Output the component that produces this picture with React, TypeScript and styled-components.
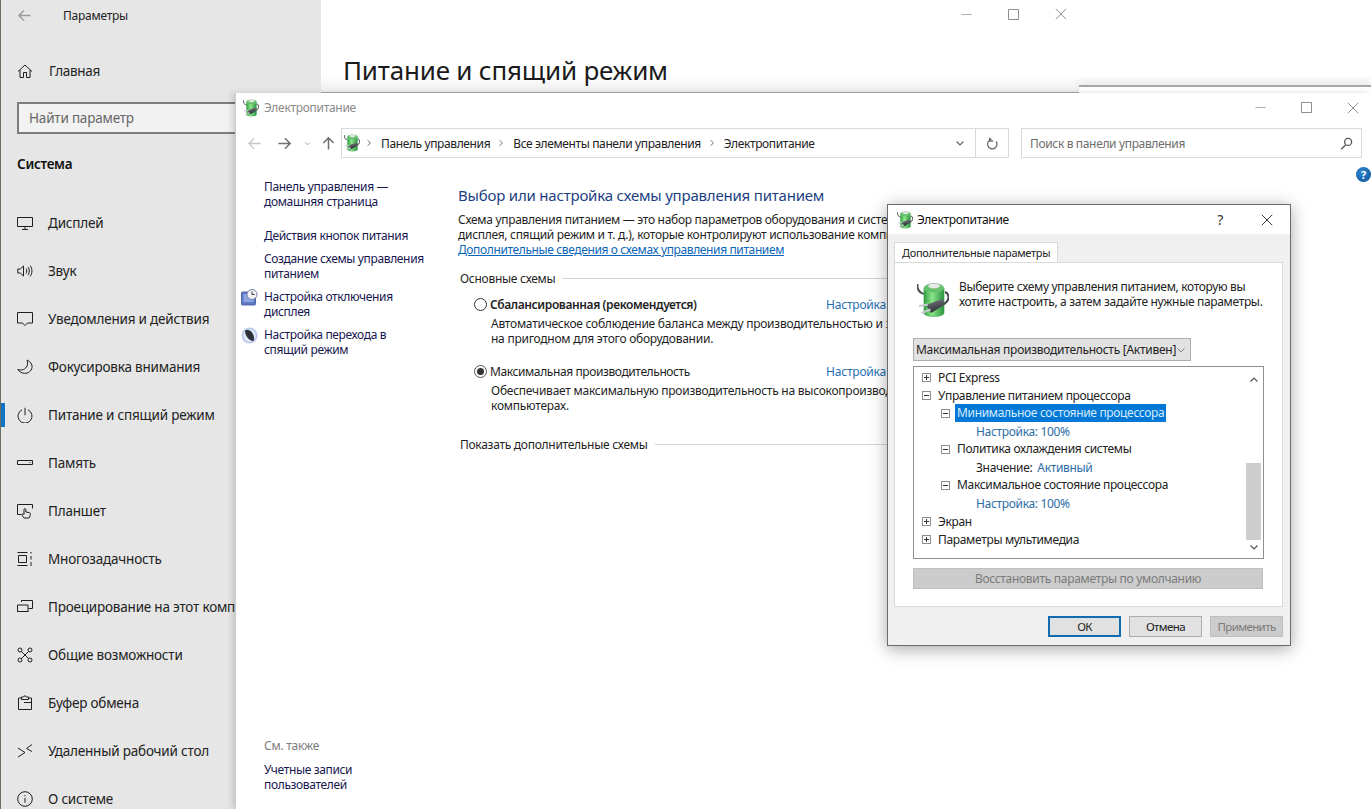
import React, { ReactNode, useId } from "react";
import styled, { createGlobalStyle } from "styled-components";

const UI = `"Noto Sans", "Open Sans", "Liberation Sans", sans-serif`;

const Global = createGlobalStyle`
  html, body { margin: 0; padding: 0; background: #fff; overflow: hidden; }
  * { box-sizing: border-box; }
  body { font-family: ${UI}; font-size: 12px; color: #1a1a1a; }
`;

const Desktop = styled.div`
  position: relative;
  width: 1371px;
  height: 809px;
  overflow: hidden;
  background: #fff;
`;

/* ---------- Settings window ---------- */
const SettingsWindow = styled.div`
  position: absolute;
  left: 0;
  top: 0;
  width: 1079px;
  height: 809px;
  display: flex;
  align-items: flex-start;
`;
const SettingsSidebar = styled.aside`
  width: 321px;
  height: 809px;
  flex: none;
  overflow: hidden;
  background: #e6e6e6;
  border-left: 1px solid #6d6d62;
  display: flex;
  flex-direction: column;
`;
const SettingsHeader = styled.div`
  height: 30px;
  flex: none;
  display: flex;
  align-items: center;
  padding-left: 16px;
  gap: 31px;
  font-size: 12px;
  letter-spacing: -0.25px;
  color: #222;
`;
const HomeRow = styled.div`
  height: 48px;
  flex: none;
  margin-top: 17px;
  display: flex;
  align-items: center;
  padding-left: 16px;
  gap: 16px;
  font-size: 13.5px;
  letter-spacing: -0.3px;
  color: #222;
`;
const SearchBox = styled.div`
  margin: 7px 0 0 16px;
  width: 290px;
  height: 32px;
  flex: none;
  border: 2px solid #7d7d7d;
  background: #f2f2f2;
  padding-left: 10px;
  display: flex;
  align-items: center;
  font-size: 13.5px;
  letter-spacing: -0.2px;
  color: #666;
`;
const SectionTitle = styled.div`
  margin: 20px 0 0 16px;
  height: 20px;
  flex: none;
  line-height: 20px;
  font-size: 13.5px;
  font-weight: 600;
  letter-spacing: -0.3px;
  color: #111;
`;
const NavList = styled.nav`
  margin-top: 25px;
  flex: none;
  display: flex;
  flex-direction: column;
`;
const NavRow = styled.div<{ $active?: boolean }>`
  position: relative;
  height: 48px;
  flex: none;
  display: flex;
  align-items: center;
  padding-left: 16px;
  gap: 15px;
  font-size: 13.5px;
  letter-spacing: -0.2px;
  white-space: nowrap;
  color: #222;
  &::before {
    content: "";
    display: ${(p) => (p.$active ? "block" : "none")};
    position: absolute;
    left: -1px;
    top: 12px;
    width: 5px;
    height: 24px;
    background: #0f74c4;
  }
`;
const SettingsMain = styled.main`
  flex: 1;
  height: 93px;
  background: linear-gradient(#fff 82%, #efefef 99%);
  border-bottom: 1px solid #a8a8a8;
  display: flex;
  flex-direction: column;
`;
const SettingsCaption = styled.div`
  height: 28px;
  flex: none;
  display: flex;
  justify-content: flex-end;
  align-items: center;
  padding-right: 12px;
  gap: 36px;
`;
const PageTitle = styled.h1`
  margin: 22px 0 0 22px;
  font-size: 26px;
  line-height: 40px;
  font-weight: 400;
  letter-spacing: -0.2px;
  color: #1b1b1b;
`;
const GlyphSvg = styled.svg`
  display: block;
  flex: none;
`;

/* ---------- Control panel window ---------- */
const RearEdge = styled.div`
  position: absolute;
  left: 1079px;
  top: 85px;
  width: 292px;
  height: 10px;
  background: #fff;
  border-top: 2px solid #a6a6a6;
  box-shadow: 0 -5px 6px rgba(0, 0, 0, 0.08);
`;
const CpWindow = styled.section`
  position: absolute;
  left: 235px;
  top: 93px;
  width: 1136px;
  height: 716px;
  background: #fff;
  box-shadow: -3px 0 6px rgba(0, 0, 0, 0.14);
  border-left: 1px solid #c9c9c9;
  display: flex;
  flex-direction: column;
`;
const CpCaption = styled.div`
  height: 29px;
  flex: none;
  display: flex;
  align-items: center;
  padding: 0 12px 0 7px;
  gap: 5px;
  font-size: 12px;
  letter-spacing: -0.3px;
  color: #8a8a8a;
`;
const CaptionSpacer = styled.div`
  flex: 1;
`;
const CpCaptionButtons = styled.div`
  display: flex;
  align-items: center;
  gap: 35px;
`;
const Toolbar = styled.div`
  height: 36px;
  flex: none;
  padding: 6px 9px 0 10px;
  display: flex;
  align-items: flex-start;
`;
const ToolButtons = styled.div`
  width: 95px;
  height: 30px;
  display: flex;
  align-items: center;
  flex: none;
`;
const ToolSlot = styled.div<{ $w: number }>`
  width: ${(p) => p.$w}px;
  display: flex;
  justify-content: center;
  flex: none;
`;
const AddressBar = styled.div`
  width: 668px;
  height: 30px;
  flex: none;
  border: 1px solid #d9d9d9;
  display: flex;
  align-items: center;
  padding-left: 2px;
  font-size: 12px;
  letter-spacing: -0.38px;
  color: #222;
`;
const Crumb = styled.span`
  white-space: nowrap;
`;
const CrumbSep = styled.span<{ $lead?: boolean }>`
  margin: 0 8px 0 ${(p) => (p.$lead ? 5 : 7)}px;
  display: flex;
`;
const AddressTail = styled.div`
  margin-left: auto;
  display: flex;
  height: 100%;
  align-items: center;
`;
const DropZone = styled.div`
  width: 30px;
  display: flex;
  justify-content: center;
`;
const RefreshZone = styled.div`
  width: 33px;
  height: 100%;
  border-left: 1px solid #d9d9d9;
  display: flex;
  justify-content: center;
  align-items: center;
`;
const SearchField = styled.div`
  margin-left: 12px;
  flex: 1;
  height: 30px;
  border: 1px solid #d9d9d9;
  display: flex;
  align-items: center;
  justify-content: space-between;
  padding: 0 8px 0 8px;
  font-size: 12px;
  letter-spacing: -0.35px;
  color: #6d6d6d;
`;
const CpBody = styled.div`
  flex: 1;
  min-height: 0;
  display: flex;
  position: relative;
`;
const LeftPane = styled.div`
  width: 222px;
  flex: none;
  padding: 21px 0 17px 5px;
  display: flex;
  flex-direction: column;
`;
const PaneLink = styled.div<{ $gap: number }>`
  margin-top: ${(p) => p.$gap}px;
  display: flex;
  font-size: 12px;
  line-height: 15px;
  letter-spacing: -0.35px;
  color: #17174f;
`;
const PaneIconSlot = styled.div`
  width: 23px;
  flex: none;
`;
const SeeAlso = styled.div`
  margin-top: auto;
  padding-left: 23px;
  font-size: 12px;
  line-height: 15px;
  letter-spacing: -0.25px;
  color: #7c7c7c;
`;
const ContentPane = styled.div`
  flex: 1;
  min-width: 0;
  padding-top: 27px;
  overflow: hidden;
`;
const Heading = styled.h2`
  margin: 0;
  font-size: 15px;
  line-height: 20px;
  font-weight: 400;
  letter-spacing: -0.2px;
  color: #1c3f83;
  white-space: nowrap;
`;
const Para = styled.div`
  margin-top: 7px;
  font-size: 12px;
  line-height: 15px;
  letter-spacing: -0.3px;
  white-space: nowrap;
  color: #1f1f1f;
`;
const MoreLink = styled.a`
  letter-spacing: -0.38px;
  color: #0a66b8;
  text-decoration: underline;
`;
const GroupHead = styled.div<{ $gap: number }>`
  margin-top: ${(p) => p.$gap}px;
  margin-left: 2px;
  width: 600px;
  display: flex;
  align-items: center;
  gap: 7px;
  font-size: 12px;
  line-height: 15px;
  letter-spacing: -0.28px;
  white-space: nowrap;
  color: #1f1f1f;
  &::after {
    content: "";
    flex: 1;
    height: 1px;
    background: #d4d4d4;
  }
`;
const Plan = styled.div<{ $gap: number }>`
  margin-top: ${(p) => p.$gap}px;
  padding-left: 16px;
  position: relative;
`;
const PlanHead = styled.div`
  display: flex;
  align-items: center;
  gap: 3px;
  font-size: 12px;
  line-height: 15px;
  white-space: nowrap;
  color: #1f1f1f;
`;
const RadioDot = styled.span<{ $on?: boolean }>`
  width: 13px;
  height: 13px;
  flex: none;
  border-radius: 50%;
  border: 1px solid ${(p) => (p.$on ? "#555" : "#333")};
  background: #fff;
  display: flex;
  align-items: center;
  justify-content: center;
  &::after {
    content: "";
    display: ${(p) => (p.$on ? "block" : "none")};
    width: 7px;
    height: 7px;
    border-radius: 50%;
    background: #333;
  }
`;
const PlanName = styled.span<{ $bold?: boolean }>`
  font-weight: ${(p) => (p.$bold ? 600 : 400)};
  letter-spacing: -0.4px;
`;
const PlanSetup = styled.a`
  position: absolute;
  left: 368px;
  top: 0;
  font-size: 12px;
  line-height: 15px;
  letter-spacing: -0.2px;
  white-space: nowrap;
  color: #1f6fb2;
`;
const PlanDesc = styled.div`
  margin: 4px 0 0 17px;
  font-size: 12px;
  line-height: 15px;
  letter-spacing: -0.25px;
  white-space: nowrap;
  color: #1f1f1f;
`;
const HelpBadge = styled.div`
  position: absolute;
  right: 0;
  top: 9px;
  width: 15px;
  height: 15px;
  border-radius: 50%;
  background: radial-gradient(circle at 40% 35%, #2f86cf, #0b4f96);
  color: #fff;
  font-size: 11px;
  font-weight: 700;
  line-height: 15px;
  text-align: center;
`;

/* ---------- Dialog ---------- */
const Dialog = styled.section`
  position: absolute;
  left: 887px;
  top: 204px;
  width: 404px;
  height: 442px;
  background: #f0f0f0;
  border: 1px solid #6b6b6b;
  box-shadow: 0 3px 16px rgba(0, 0, 0, 0.35);
  display: flex;
  flex-direction: column;
`;
const DialogCaption = styled.div`
  height: 29px;
  flex: none;
  background: #fff;
  display: flex;
  align-items: center;
  padding: 0 17px 0 9px;
  gap: 4px;
  font-size: 12px;
  letter-spacing: -0.3px;
  color: #111;
`;
const HelpMark = styled.span`
  font-size: 14px;
  margin-right: 34px;
  color: #333;
`;
const TabStrip = styled.div`
  padding: 8px 0 0 6px;
  flex: none;
  display: flex;
`;
const Tab = styled.div`
  height: 21px;
  width: 164px;
  background: #fff;
  border: 1px solid #d9d9d9;
  border-bottom: none;
  padding-left: 7px;
  font-size: 11px;
  line-height: 20px;
  letter-spacing: -0.3px;
  white-space: nowrap;
  color: #222;
`;
const TabPanel = styled.div`
  margin: -1px 7px 0 6px;
  height: 345px;
  flex: none;
  background: #fff;
  border: 1px solid #d9d9d9;
  padding: 0 18px;
  display: flex;
  flex-direction: column;
`;
const Intro = styled.div`
  margin-top: 19px;
  height: 38px;
  display: flex;
  gap: 10px;
  padding-left: 4px;
  flex: none;
`;
const IntroText = styled.div`
  font-size: 12px;
  line-height: 15px;
  letter-spacing: -0.33px;
  white-space: nowrap;
  margin-top: -3px;
  color: #222;
`;
const PlanSelect = styled.div`
  margin-top: 18px;
  width: 278px;
  height: 23px;
  flex: none;
  background: #e2e2e2;
  border: 1px solid #adadad;
  display: flex;
  align-items: center;
  justify-content: space-between;
  padding: 0 4px 0 2px;
  font-size: 12px;
  letter-spacing: -0.27px;
  white-space: nowrap;
  color: #222;
`;
const Tree = styled.div`
  margin-top: 5px;
  width: 351px;
  height: 193px;
  flex: none;
  border: 1px solid #8f8f8f;
  display: flex;
`;
const TreeRows = styled.div`
  flex: 1;
  padding-top: 1px;
  min-width: 0;
`;
const TreeRow = styled.div<{ $depth: number }>`
  height: 18px;
  padding-left: ${(p) => 8 + p.$depth * 19}px;
  display: flex;
  align-items: center;
  font-size: 12px;
  letter-spacing: -0.33px;
  white-space: nowrap;
  color: #222;
`;
const TreeValueRow = styled(TreeRow)`
  padding-left: 62px;
`;
const Expander = styled.span<{ $open?: boolean }>`
  position: relative;
  width: 9px;
  height: 9px;
  flex: none;
  margin-right: 7px;
  border: 1px solid #8e8e8e;
  background: #fff;
  &::before {
    content: "";
    position: absolute;
    left: 1px;
    top: 3px;
    width: 5px;
    height: 1px;
    background: #333;
  }
  &::after {
    content: "";
    display: ${(p) => (p.$open ? "none" : "block")};
    position: absolute;
    left: 3px;
    top: 1px;
    width: 1px;
    height: 5px;
    background: #333;
  }
`;
const RowLabel = styled.span<{ $selected?: boolean }>`
  height: 18px;
  line-height: 18px;
  margin-left: -2px;
  padding: 0 2px;
  background: ${(p) => (p.$selected ? "#0078d7" : "transparent")};
  color: ${(p) => (p.$selected ? "#d6ebfb" : "inherit")};
`;
const RowValue = styled.span`
  color: #2c6ea6;
`;
const RowKey = styled.span`
  margin-right: 5px;
`;
const ScrollBar = styled.div`
  width: 15px;
  margin-right: 2px;
  flex: none;
  display: flex;
  flex-direction: column;
  align-items: center;
  justify-content: space-between;
  padding: 8px 0 6px;
  position: relative;
`;
const ScrollThumb = styled.div`
  position: absolute;
  left: 0;
  top: 96px;
  width: 15px;
  height: 77px;
  background: #cdcdcd;
`;
const RestoreButton = styled.div`
  margin-top: 9px;
  width: 350px;
  height: 21px;
  flex: none;
  background: #cccccc;
  border: 1px solid #bfbfbf;
  display: flex;
  align-items: center;
  justify-content: center;
  font-size: 12px;
  letter-spacing: -0.3px;
  color: #7b7b7b;
`;
const DialogFooter = styled.div`
  margin-top: 9px;
  padding-right: 7px;
  display: flex;
  justify-content: flex-end;
  gap: 8px;
`;
const FooterButton = styled.div<{ $kind?: "primary" | "disabled" }>`
  width: 73px;
  height: 21px;
  display: flex;
  align-items: center;
  justify-content: center;
  font-size: 11.5px;
  letter-spacing: -0.6px;
  background: ${(p) => (p.$kind === "disabled" ? "#cccccc" : "#e1e1e1")};
  border: ${(p) =>
    p.$kind === "primary" ? "2px solid #0f6cb0" : p.$kind === "disabled" ? "1px solid #bfbfbf" : "1px solid #adadad"};
  color: ${(p) => (p.$kind === "disabled" ? "#7b7b7b" : "#222")};
`;

/* ---------- Icons ---------- */
type GlyphProps = { size?: number; color?: string; children: ReactNode; sw?: number };
const Glyph = ({ size = 16, color = "#1f1f1f", children, sw = 1 }: GlyphProps) => (
  <GlyphSvg width={size} height={size} viewBox="0 0 16 16" fill="none" stroke={color} strokeWidth={sw}>
    {children}
  </GlyphSvg>
);

const HomeIcon = () => (
  <Glyph>
    <path d="M1 8.5 8 2l7 6.5M3 7v7.5h3.5v-5h3v5H13V7" />
  </Glyph>
);
const DisplayIcon = () => (
  <Glyph>
    <path d="M.5 2.5h15v9H.5zM8 11.5v3M5 14.5h6" />
  </Glyph>
);
const SoundIcon = () => (
  <Glyph>
    <path d="M.8 6h2.4L6.5 3v10L3.2 10H.8zM9 5.5c1 1.4 1 3.6 0 5M11 4c1.8 2.2 1.8 5.8 0 8M13 2.5c2.6 3 2.6 8 0 11" />
  </Glyph>
);
const NotifyIcon = () => (
  <Glyph>
    <path d="M.5 1.5h15V12H10.5L8 14.5 5.5 12H.5z" />
  </Glyph>
);
const MoonIcon = () => (
  <Glyph>
    <path d="M10 1c3 1.5 5.5 4 5 7.5-.6 3.8-4 6-7.5 5.8C4.5 14.2 2 12.5.8 10.5c4 1.5 8-.5 9.2-3.5.8-2 .7-4 0-6z" />
  </Glyph>
);
const PowerIcon = () => (
  <Glyph>
    <path d="M8 .8v7.5M5 2.8a7 7 0 1 0 6 0" />
  </Glyph>
);
const MemoryIcon = () => (
  <Glyph>
    <path d="M.5 5.5h15v4H.5zM12.5 7.5h1" />
  </Glyph>
);
const TabletIcon = () => (
  <Glyph>
    <path d="M4.5 11.5H.5v-10h15v4M7 15c-1-1.5-2-2.500-2-3.500s1-.8 2 0V6.500c0-1.200 1.800-1.200 1.800 0V9l3.700.6c.9.300 1 1 .8 2-.2 1.200-.5 2.400-1.300 3.400z" />
  </Glyph>
);
const MultitaskIcon = () => (
  <Glyph>
    <path d="M.5 1.5h10M.5 14.5h10M1.500 4.500h8v7h-8zM14 1v1.500M14 5v3.500M14 11v4" />
  </Glyph>
);
const ProjectIcon = () => (
  <Glyph>
    <path d="M4.500 3V1.500h11v8h-4M.5 6H11v6.500H.5zM0 12.500h11.500" />
  </Glyph>
);
const AccessIcon = () => (
  <Glyph>
    <circle cx="3" cy="3" r="2" />
    <circle cx="13" cy="3" r="2" />
    <circle cx="3" cy="13" r="2" />
    <circle cx="13" cy="13" r="2" />
    <path d="M4.500 4.500l7 7M11.500 4.500l-7 7" />
  </Glyph>
);
const ClipIcon = () => (
  <Glyph>
    <path d="M4.500 3H1.500v11.500h13V3H11M4.500 4.500V2h2c0-1.500 3-1.500 3 0h2v2.500zM7 7.500h7.500" />
  </Glyph>
);
const RemoteIcon = () => (
  <Glyph>
    <path d="M1 5l7 4.500-7 4.500M15 1.500L9.500 5.500l5.500 3" />
  </Glyph>
);
const InfoIcon = () => (
  <Glyph>
    <circle cx="8" cy="8" r="7.3" />
    <path d="M8 6.800v5M8 4v1.200" />
  </Glyph>
);

const ArrowLeft = ({ color }: { color: string }) => (
  <Glyph size={15} color={color} sw={1.4}>
    <path d="M14.500 8H2M7.500 2.500 2 8l5.500 5.500" />
  </Glyph>
);
const ArrowRight = ({ color }: { color: string }) => (
  <Glyph size={15} color={color} sw={1.6}>
    <path d="M1.500 8H14M8.500 2.500 14 8l-5.500 5.500" />
  </Glyph>
);
const ArrowUp = ({ color }: { color: string }) => (
  <Glyph size={15} color={color} sw={1.6}>
    <path d="M8 14.500V2M2.500 7.500 8 2l5.500 5.500" />
  </Glyph>
);
const Chevron = ({ size = 9, color = "#666", sw = 1.6 }: { size?: number; color?: string; sw?: number }) => (
  <Glyph size={size} color={color} sw={sw}>
    <path d="M2.500 5.500 8 11l5.500-5.500" />
  </Glyph>
);
const ChevronUp = ({ size = 9, color = "#666", sw = 1.6 }: { size?: number; color?: string; sw?: number }) => (
  <Glyph size={size} color={color} sw={sw}>
    <path d="M2.500 10.500 8 5l5.500 5.500" />
  </Glyph>
);
const ChevronRight = () => (
  <Glyph size={8} color="#777" sw={2}>
    <path d="M5 2.500l6 5.500-6 5.500" />
  </Glyph>
);
const RefreshIcon = () => (
  <Glyph size={13} color="#6a6a6a" sw={1.6}>
    <path d="M12.500 5.500A5.800 5.800 0 1 1 7 3H4.500M4.500 .5V5H9" />
  </Glyph>
);
const LensIcon = () => (
  <Glyph size={13} color="#555" sw={1.6}>
    <circle cx="10" cy="6" r="4.300" />
    <path d="M7 9.500 1.500 15" />
  </Glyph>
);
const WinMin = ({ c = "#888" }: { c?: string }) => (
  <Glyph size={11} color={c}>
    <path d="M.5 8h15" />
  </Glyph>
);
const WinMax = ({ c = "#888" }: { c?: string }) => (
  <Glyph size={11} color={c} sw={1.4}>
    <path d="M.7.7h14.600v14.600H.7z" />
  </Glyph>
);
const WinClose = ({ c = "#888" }: { c?: string }) => (
  <Glyph size={12} color={c} sw={1.2}>
    <path d="M1 1l14 14M15 1 1 15" />
  </Glyph>
);

const PowerPlanIcon = ({ size = 16 }: { size?: number }) => {
  const id = useId().replace(/:/g, "");
  return (
    <GlyphSvg width={size} height={size * 1.125} viewBox="0 0 32 36" fill="none">
      <defs>
        <linearGradient id={`b${id}`} x1="0" x2="1" y1="0" y2="0">
          <stop offset="0" stopColor="#2f9d42" />
          <stop offset="0.4" stopColor="#8ce58a" />
          <stop offset="1" stopColor="#2c9240" />
        </linearGradient>
        <linearGradient id={`p${id}`} x1="0" x2="0.3" y1="0" y2="1">
          <stop offset="0" stopColor="#7b7f83" />
          <stop offset="1" stopColor="#2c2f33" />
        </linearGradient>
      </defs>
      <path d="M.5 2C0 8 3 11 7 12" stroke="#45494d" strokeWidth="1.800" />
      <path d="M28 10c4 1 4.500 7 1.500 10-1 1-2 1.500-3 1.800" stroke="#45494d" strokeWidth="2" />
      <path d="M7 6v25c0 4.500 20 4.500 20 0V6z" fill={`url(#b${id})`} stroke="#41a350" strokeWidth="0.700" />
      <ellipse cx="17" cy="6" rx="10" ry="4.300" fill="#5fc565" stroke="#7bb883" strokeWidth="0.700" />
      <ellipse cx="17" cy="4" rx="6" ry="2.600" fill="#e6ece6" stroke="#a9b9a9" strokeWidth="0.600" />
      <path d="M9 23l16-6 4 5-15 9z" fill={`url(#p${id})`} />
      <path d="M2 24l9-1.500M4.500 31l9-3.500" stroke="#c6cacd" strokeWidth="2.200" />
    </GlyphSvg>
  );
};

const ClockScreenIcon = () => (
  <GlyphSvg width={17} height={17} viewBox="0 0 17 17">
    <rect x="0.5" y="3" width="14" height="13" rx="1" fill="#5e79c4" stroke="#5068ad" />
    <rect x="2.5" y="5" width="10" height="8" fill="#8fa6e2" />
    <circle cx="11" cy="5.5" r="5" fill="#f2f2f2" stroke="#6f7fae" />
    <path d="M11 2.500v3h2.500" stroke="#333" fill="none" />
  </GlyphSvg>
);
const SleepIcon = () => (
  <GlyphSvg width={17} height={17} viewBox="0 0 17 17">
    <circle cx="8.5" cy="8.5" r="8" fill="#b9c9ea" />
    <circle cx="8.5" cy="8.5" r="6.3" fill="#dfe6f4" />
    <path d="M4 3.500c4-1.500 8 1 9 7 .2 1.500-.2 2.700-.7 3.500C8 13.500 4 9 4 3.500z" fill="#2d3038" />
  </GlyphSvg>
);

const navItems: { label: string; icon: ReactNode; active?: boolean }[] = [
  { label: "Дисплей", icon: <DisplayIcon /> },
  { label: "Звук", icon: <SoundIcon /> },
  { label: "Уведомления и действия", icon: <NotifyIcon /> },
  { label: "Фокусировка внимания", icon: <MoonIcon /> },
  { label: "Питание и спящий режим", icon: <PowerIcon />, active: true },
  { label: "Память", icon: <MemoryIcon /> },
  { label: "Планшет", icon: <TabletIcon /> },
  { label: "Многозадачность", icon: <MultitaskIcon /> },
  { label: "Проецирование на этот компьютер", icon: <ProjectIcon /> },
  { label: "Общие возможности", icon: <AccessIcon /> },
  { label: "Буфер обмена", icon: <ClipIcon /> },
  { label: "Удаленный рабочий стол", icon: <RemoteIcon /> },
  { label: "О системе", icon: <InfoIcon /> },
];

export default function App() {
  return (
    <Desktop>
      <Global />
      <SettingsWindow>
        <SettingsSidebar>
          <SettingsHeader>
            <ArrowLeft color="#9a9a9a" />
            <span>Параметры</span>
          </SettingsHeader>
          <HomeRow>
            <HomeIcon />
            Главная
          </HomeRow>
          <SearchBox>Найти параметр</SearchBox>
          <SectionTitle>Система</SectionTitle>
          <NavList>
            {navItems.map((n) => (
              <NavRow key={n.label} $active={n.active}>
                {n.icon}
                {n.label}
              </NavRow>
            ))}
          </NavList>
        </SettingsSidebar>
        <SettingsMain>
          <SettingsCaption>
            <WinMin />
            <WinMax />
            <WinClose />
          </SettingsCaption>
          <PageTitle>Питание и спящий режим</PageTitle>
        </SettingsMain>
      </SettingsWindow>

      <RearEdge />
      <CpWindow>
        <CpCaption>
          <PowerPlanIcon />
          Электропитание
          <CaptionSpacer />
          <CpCaptionButtons>
            <WinMin />
            <WinMax />
            <WinClose />
          </CpCaptionButtons>
        </CpCaption>
        <Toolbar>
          <ToolButtons>
            <ToolSlot $w={16}>
              <ArrowLeft color="#c8c8c8" />
            </ToolSlot>
            <ToolSlot $w={44}>
              <ArrowRight color="#707070" />
            </ToolSlot>
            <ToolSlot $w={3}>
              <Chevron size={7} color="#888" />
            </ToolSlot>
            <ToolSlot $w={39}>
              <ArrowUp color="#707070" />
            </ToolSlot>
          </ToolButtons>
          <AddressBar>
            <PowerPlanIcon size={16} />
            <CrumbSep $lead>
              <ChevronRight />
            </CrumbSep>
            <Crumb>Панель управления</Crumb>
            <CrumbSep>
              <ChevronRight />
            </CrumbSep>
            <Crumb>Все элементы панели управления</Crumb>
            <CrumbSep>
              <ChevronRight />
            </CrumbSep>
            <Crumb>Электропитание</Crumb>
            <AddressTail>
              <DropZone>
                <Chevron size={10} color="#666" sw={2} />
              </DropZone>
              <RefreshZone>
                <RefreshIcon />
              </RefreshZone>
            </AddressTail>
          </AddressBar>
          <SearchField>
            Поиск в панели управления
            <LensIcon />
          </SearchField>
        </Toolbar>
        <CpBody>
          <HelpBadge>?</HelpBadge>
          <LeftPane>
            <PaneLink $gap={0}>
              <PaneIconSlot />
              <span>
                Панель управления —
                <br />
                домашняя страница
              </span>
            </PaneLink>
            <PaneLink $gap={19}>
              <PaneIconSlot />
              <span>Действия кнопок питания</span>
            </PaneLink>
            <PaneLink $gap={8}>
              <PaneIconSlot />
              <span>
                Создание схемы управления
                <br />
                питанием
              </span>
            </PaneLink>
            <PaneLink $gap={8}>
              <PaneIconSlot>
                <ClockScreenIcon />
              </PaneIconSlot>
              <span>
                Настройка отключения
                <br />
                дисплея
              </span>
            </PaneLink>
            <PaneLink $gap={8}>
              <PaneIconSlot>
                <SleepIcon />
              </PaneIconSlot>
              <span>
                Настройка перехода в
                <br />
                спящий режим
              </span>
            </PaneLink>
            <SeeAlso>См. также</SeeAlso>
            <PaneLink $gap={9}>
              <PaneIconSlot />
              <span>
                Учетные записи
                <br />
                пользователей
              </span>
            </PaneLink>
          </LeftPane>
          <ContentPane>
            <Heading>Выбор или настройка схемы управления питанием</Heading>
            <Para>
              Схема управления питанием — это набор параметров оборудования и системных настроек (яркость
              <br />
              дисплея, спящий режим и т. д.), которые контролируют использование компьютером электроэнергии.
              <br />
              <MoreLink>Дополнительные сведения о схемах управления питанием</MoreLink>
            </Para>
            <GroupHead $gap={14}>Основные схемы</GroupHead>
            <Plan $gap={11}>
              <PlanHead>
                <RadioDot />
                <PlanName $bold>Сбалансированная (рекомендуется)</PlanName>
              </PlanHead>
              <PlanSetup>Настройка схемы электропитания</PlanSetup>
              <PlanDesc>
                Автоматическое соблюдение баланса между производительностью и энергопотреблением
                <br />
                на пригодном для этого оборудовании.
              </PlanDesc>
            </Plan>
            <Plan $gap={18}>
              <PlanHead>
                <RadioDot $on />
                <PlanName>Максимальная производительность</PlanName>
              </PlanHead>
              <PlanSetup>Настройка схемы электропитания</PlanSetup>
              <PlanDesc>
                Обеспечивает максимальную производительность на высокопроизводительных
                <br />
                компьютерах.
              </PlanDesc>
            </Plan>
            <GroupHead $gap={24}>Показать дополнительные схемы</GroupHead>
          </ContentPane>
        </CpBody>
      </CpWindow>

      <Dialog>
        <DialogCaption>
          <PowerPlanIcon />
          Электропитание
          <CaptionSpacer />
          <HelpMark>?</HelpMark>
          <WinClose c="#222" />
        </DialogCaption>
        <TabStrip>
          <Tab>Дополнительные параметры</Tab>
        </TabStrip>
        <TabPanel>
          <Intro>
            <PowerPlanIcon size={32} />
            <IntroText>
              Выберите схему управления питанием, которую вы
              <br />
              хотите настроить, а затем задайте нужные параметры.
            </IntroText>
          </Intro>
          <PlanSelect>
            Максимальная производительность [Активен]
            <Chevron size={10} color="#555" sw={1.2} />
          </PlanSelect>
          <Tree>
            <TreeRows>
              <TreeRow $depth={0}>
                <Expander />
                PCI Express
              </TreeRow>
              <TreeRow $depth={0}>
                <Expander $open />
                Управление питанием процессора
              </TreeRow>
              <TreeRow $depth={1}>
                <Expander $open />
                <RowLabel $selected>Минимальное состояние процессора</RowLabel>
              </TreeRow>
              <TreeValueRow $depth={3}>
                <RowValue>Настройка: 100%</RowValue>
              </TreeValueRow>
              <TreeRow $depth={1}>
                <Expander $open />
                <RowLabel>Политика охлаждения системы</RowLabel>
              </TreeRow>
              <TreeValueRow $depth={3}>
                <RowKey>Значение:</RowKey>
                <RowValue>Активный</RowValue>
              </TreeValueRow>
              <TreeRow $depth={1}>
                <Expander $open />
                <RowLabel>Максимальное состояние процессора</RowLabel>
              </TreeRow>
              <TreeValueRow $depth={3}>
                <RowValue>Настройка: 100%</RowValue>
              </TreeValueRow>
              <TreeRow $depth={0}>
                <Expander />
                Экран
              </TreeRow>
              <TreeRow $depth={0}>
                <Expander />
                Параметры мультимедиа
              </TreeRow>
            </TreeRows>
            <ScrollBar>
              <ScrollThumb />
              <ChevronUp size={10} color="#555" sw={2} />
              <Chevron size={10} color="#555" sw={2} />
            </ScrollBar>
          </Tree>
          <RestoreButton>Восстановить параметры по умолчанию</RestoreButton>
        </TabPanel>
        <DialogFooter>
          <FooterButton $kind="primary">ОК</FooterButton>
          <FooterButton>Отмена</FooterButton>
          <FooterButton $kind="disabled">Применить</FooterButton>
        </DialogFooter>
      </Dialog>
    </Desktop>
  );
}
